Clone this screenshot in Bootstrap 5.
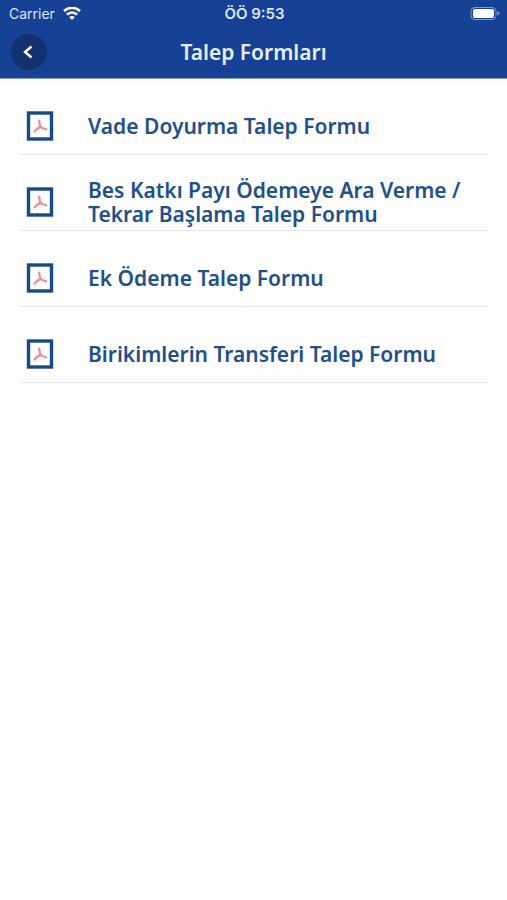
<!DOCTYPE html>
<html lang="tr">
<head>
<meta charset="utf-8">
<meta name="viewport" content="width=device-width, initial-scale=1">
<title>Talep Formları</title>
<link href="https://cdn.jsdelivr.net/npm/bootstrap@5.3.0/dist/css/bootstrap.min.css" rel="stylesheet">
<style>
  body { font-family: "Noto Sans", sans-serif; background: #fefefe; }
  .app-header { background: #164194; border-bottom: 1px solid #7f9fdc; }
  .status-bar { height: 27px; padding: 0 7px 0 9px; font: 400 14px/27px Inter, sans-serif; color: #dbe6fa; }
  .status-time { font-size: 15px; font-weight: 600; }
  .title-bar { height: 51px; padding: 0 11px 2px 11px; }
  .back-btn { width: 36px; height: 36px; background: #12326f; border-radius: 50%; }
  .page-title { font-size: 21px; line-height: 24px; font-weight: 600; color: #e6eefc; }
  .form-list { padding: 0 19px 0 20px; }
  .form-row { height: 76px; padding: 18px 0 0 6px; gap: 34px; border-bottom: 1px solid #e6e6e8; color: #1f5089; font-size: 21px; line-height: 24px; font-weight: 600; }
  .form-row:hover { color: #0b356a; }
</style>
<script src="https://cdn.jsdelivr.net/npm/bootstrap@5.3.0/dist/js/bootstrap.bundle.min.js" defer></script>
</head>
<body>
<svg class="d-none" aria-hidden="true">
  <symbol id="pdf" viewBox="0 0 28 30">
    <rect x="2.500" y="2" width="23" height="26" fill="#fff" stroke="#164b87" stroke-width="3.400"/>
    <path d="M13.300 9.500C13 11.500 13.800 13.500 14.500 15.500M14.500 15.500C12.500 16.500 10.500 18.500 8.500 20.500M14.500 15.500C16 17 18 18 20.300 18.300" fill="none" stroke="#e98f93" stroke-width="2.200" stroke-linecap="round"/>
    <path d="M11.500 17.800L14.500 15L16.800 17.200Z" fill="#e98f93"/>
  </symbol>
</svg>
<header class="app-header">
  <div class="status-bar row g-0">
    <div class="col d-flex align-items-center gap-2">
      <span>Carrier</span>
      <svg width="18" height="14" viewBox="0 0 18 14" fill="none" stroke="#fff" stroke-width="2.500" role="img" aria-label="Wi-Fi">
        <path d="M1 4.200C5.500-.4 12.500-.4 17 4.200M4 7.600C6.800 4.700 11.200 4.700 14 7.600"/>
        <path d="M9 13L6.200 10.200C7.800 8.700 10.200 8.700 11.800 10.200Z" fill="#fff" stroke="none"/>
      </svg>
    </div>
    <div class="col-auto status-time">ÖÖ 9:53</div>
    <div class="col d-flex align-items-center justify-content-end">
      <svg width="30" height="14" viewBox="0 0 30 14" role="img" aria-label="Pil dolu">
        <rect x="1" y=".5" width="25" height="12" rx="4" fill="none" stroke="#7f9bd0"/>
        <rect x="3" y="2" width="21" height="9" rx="2" fill="#fff"/>
        <path d="M27.500 4.300C30.200 5 30.200 8 27.500 8.700Z" fill="#7f9bd0"/>
      </svg>
    </div>
  </div>
  <div class="title-bar row g-0 align-items-center">
    <div class="col">
      <button type="button" class="back-btn btn border-0 p-0 d-flex align-items-center justify-content-center" aria-label="Geri">
        <svg width="14" height="14" viewBox="0 0 14 14" fill="none" stroke="#fff" stroke-width="2.400"><path d="M9.500 1.500L3 7L9.500 12.500"/></svg>
      </button>
    </div>
    <h1 class="page-title col-auto m-0">Talep Formları</h1>
    <div class="col"></div>
  </div>
</header>
<main>
  <nav class="form-list d-flex flex-column" aria-label="Talep formları">
    <a href="#" class="form-row d-flex align-items-center text-decoration-none"><svg class="flex-shrink-0" width="28" height="30" aria-hidden="true"><use href="#pdf"/></svg><span>Vade Doyurma Talep Formu</span></a>
    <a href="#" class="form-row d-flex align-items-center text-decoration-none"><svg class="flex-shrink-0" width="28" height="30" aria-hidden="true"><use href="#pdf"/></svg><span>Bes Katkı Payı Ödemeye Ara Verme / Tekrar Başlama Talep Formu</span></a>
    <a href="#" class="form-row d-flex align-items-center text-decoration-none"><svg class="flex-shrink-0" width="28" height="30" aria-hidden="true"><use href="#pdf"/></svg><span>Ek Ödeme Talep Formu</span></a>
    <a href="#" class="form-row d-flex align-items-center text-decoration-none"><svg class="flex-shrink-0" width="28" height="30" aria-hidden="true"><use href="#pdf"/></svg><span>Birikimlerin Transferi Talep Formu</span></a>
  </nav>
</main>
</body>
</html>
